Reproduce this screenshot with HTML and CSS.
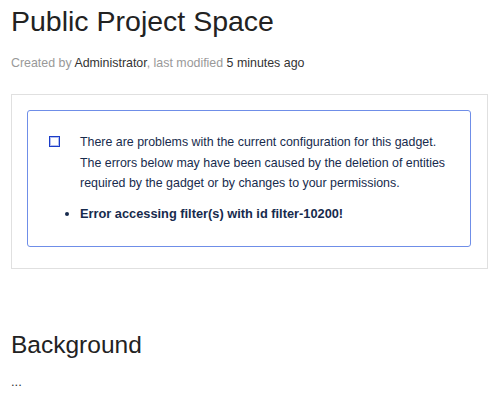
FILE: index.html
```html
<!DOCTYPE html>
<html>
<head>
<meta charset="utf-8">
<link rel="stylesheet" href="styles.css">
</head>
<body>
<div class="page">
  <h1 class="title">Public Project Space</h1>
  <div class="meta"><span class="muted">Created by</span> Administrator<span class="muted">, last modified</span> 5 minutes ago</div>
  <div class="gadget">
    <div class="warning">
      <div class="warn-row">
        <span class="checkbox"></span>
        <div class="warn-body">
          <p class="warn-text">There are problems with the current configuration for this gadget. The errors below may have been caused by the deletion of entities required by the gadget or by changes to your permissions.</p>
          <ul class="errors">
            <li>Error accessing filter(s) with id filter-10200!</li>
          </ul>
        </div>
      </div>
    </div>
  </div>
  <h2 class="section">Background</h2>
  <p class="dots">...</p>
</div>
</body>
</html>
```
FILE: styles.css
```css
html, body {
  margin: 0;
  padding: 0;
  background: #fff;
}
.page {
  padding: 5px 12px 0 11px;
  font-family: "Liberation Sans", Arial, sans-serif;
  color: #222;
}
.title {
  margin: 0;
  font-size: 28.5px;
  line-height: 32px;
  font-weight: normal;
  color: #222;
}
.meta {
  margin-top: 18px;
  font-size: 12.4px;
  line-height: 16px;
  color: #333;
}
.muted {
  color: #999;
}
.gadget {
  margin-top: 23px;
  width: 477px;
  box-sizing: border-box;
  border: 1px solid #e0e0e0;
  padding: 15px 16px 21px 15px;
}
.warning {
  border: 1px solid #6f8ee8;
  border-radius: 3px;
  padding: 21px 16px 22px 21px;
  color: #172b4d;
  font-size: 12.4px;
  line-height: 20.5px;
}
.warn-row {
  display: flex;
}
.checkbox {
  flex: none;
  box-sizing: border-box;
  width: 11px;
  height: 11px;
  border: 1px solid #1a3cc8;
  box-shadow: inset 0 0 0 1px rgba(40, 70, 210, 0.35);
  margin-top: 4px;
  margin-right: 20px;
}
.warn-body {
  flex: 1;
}
.warn-text {
  margin: 0;
}
.errors {
  margin: 10px 0 0 0;
  padding: 0;
  font-weight: bold;
  font-size: 12.8px;
  list-style: disc outside;
}
.section {
  margin: 62px 0 0 0;
  font-size: 24.5px;
  line-height: 28px;
  font-weight: normal;
  color: #222;
}
.dots {
  margin: 15px 0 0 0;
  font-size: 13px;
  line-height: 16px;
  color: #333;
}
```
